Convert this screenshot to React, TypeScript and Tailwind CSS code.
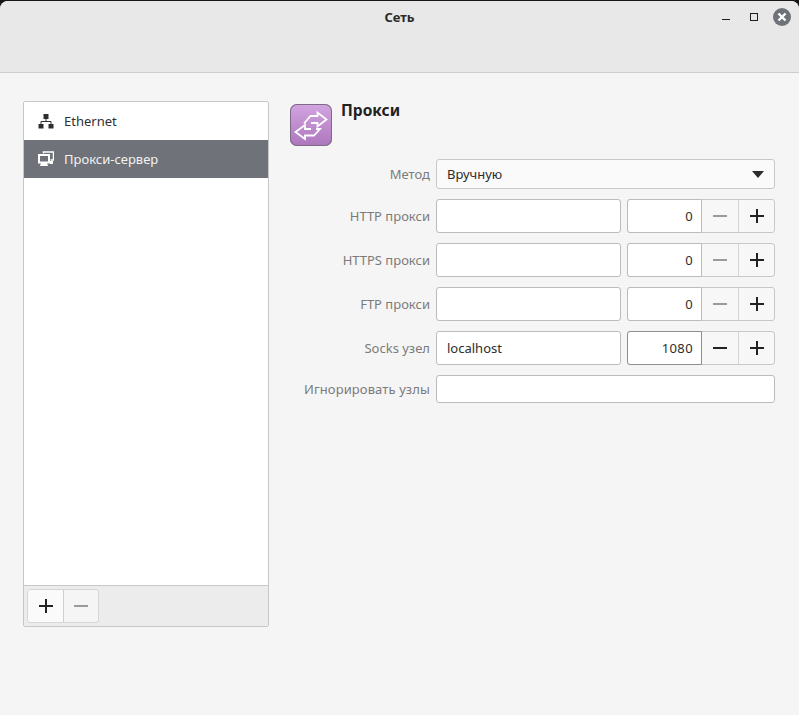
const font = { fontFamily: '"Noto Sans", "Open Sans", sans-serif' };

function Plus({ className = "" }: { className?: string }) {
  return (
    <svg width="16" height="16" viewBox="0 0 16 16" className={className}>
      <path d="M1 8h14M8 1v14" stroke="currentColor" strokeWidth="2" fill="none" />
    </svg>
  );
}

function Minus({ className = "" }: { className?: string }) {
  return (
    <svg width="16" height="16" viewBox="0 0 16 16" className={className}>
      <path d="M1 8h14" stroke="currentColor" strokeWidth="2" fill="none" />
    </svg>
  );
}

function Spin({ value, active = false }: { value: string; active?: boolean }) {
  return (
    <div className="flex h-full w-[148px] rounded-[3px] border border-[#c8c8c8] bg-[#f7f7f7]">
      <div
        className={`-m-px flex h-[34px] w-[75px] items-center justify-end rounded-l-[3px] border bg-white pr-[8px] pt-[2px] text-[13px] tracking-[0.4px] text-[#2e2e2e] ${
          active ? "border-[#8e8e8e]" : "border-[#bcbcbc]"
        }`}
      >
        {value}
      </div>
      <button className={`flex w-[37px] items-center justify-center ${active ? "text-[#222222]" : "text-[#9a9a9a]"}`}>
        <Minus />
      </button>
      <button className="flex flex-1 items-center justify-center border-l border-[#d4d4d4] text-[#222222]">
        <Plus />
      </button>
    </div>
  );
}

function Row({ label, host = "", port, active = false }: { label: string; host?: string; port: string; active?: boolean }) {
  return (
    <div className="flex h-[34px] items-center">
      <span className="w-[140px] pt-[2px] text-right text-[13px] text-[#7b7b7b]">{label}</span>
      <div className="mx-[6px] flex h-full w-[185px] items-center rounded-[3px] border border-[#bcbcbc] bg-white px-[10px] pt-[2px] text-[13px] text-[#2e2e2e]">
        {host}
      </div>
      <Spin value={port} active={active} />
    </div>
  );
}

export default function App() {
  return (
    <div className="h-[715px] w-[799px] overflow-hidden bg-[#161616]" style={font}>
      <div className="mt-px flex h-[714px] flex-col overflow-hidden rounded-t-[8px] bg-[#f5f5f5]">
        <header className="relative h-[72px] shrink-0 border-b border-[#cdcdcd] bg-[#e8e8e8]">
          <div className="pt-[6px] text-center text-[13px] font-bold leading-[20px] text-[#2b2b2b]">Сеть</div>
          <div className="absolute right-[8px] top-[7px] flex items-center">
            <div className="mr-[20px] mt-[5px] h-[1.5px] w-[8px] bg-[#1e1e1e]" />
            <div className="mr-[15px] h-[8px] w-[8px] border-[1.5px] border-[#1e1e1e]" />
            <div className="flex h-[18px] w-[18px] items-center justify-center rounded-full bg-[#6f7278]">
              <svg width="10" height="10" viewBox="0 0 10 10">
                <path d="M1.5 1.5l7 7M8.5 1.5l-7 7" stroke="#ffffff" strokeWidth="2.4" fill="none" />
              </svg>
            </div>
          </div>
        </header>

        <main className="flex flex-1 pl-[23px] pt-[28px]">
          <div className="flex h-[526px] w-[246px] flex-col rounded-[2px] border border-[#c8c8c8] bg-white">
            <div className="flex h-[38px] items-center pl-[14px] text-[13px] text-[#303030]">
              <svg width="16" height="16" viewBox="0 0 16 16" className="mr-[10px]">
                <path d="M5.5 1h5v5h-5zM0.5 11h5v4.500h-5zM10.500 11h5v4.500h-5z" fill="#2e2e2e" />
                <path d="M8 6v3M3 11V8.500h10V11" stroke="#2e2e2e" strokeWidth="1" fill="none" />
              </svg>
              <span className="pt-[2px]">Ethernet</span>
            </div>
            <div className="flex h-[38px] items-center bg-[#6f7278] pl-[14px] text-[13px] text-[#f2f2f2]">
              <svg width="16" height="16" viewBox="0 0 16 16" className="mr-[10px]">
                <path d="M5.500 2.500V1h10v8h-3" stroke="#ffffff" strokeWidth="1.500" fill="none" />
                <path d="M12 10h3v3h-3z" fill="#ffffff" />
                <path d="M1 4h10v7.500H1z" stroke="#ffffff" strokeWidth="2" fill="none" />
                <path d="M3 12h6l1 3H2z" fill="#ffffff" />
              </svg>
              <span className="pt-[2px]">Прокси-сервер</span>
            </div>
            <div className="flex-1" />
            <div className="flex h-[41px] items-center rounded-b-[2px] border-t border-[#c8c8c8] bg-[#ececec] pl-[3px]">
              <div className="flex h-[34px] w-[72px] rounded-[3px] border border-[#d6d6d6] bg-[#f5f5f5]">
                <button className="flex w-[36px] items-center justify-center rounded-l-[3px] border-r border-[#cfcfcf] bg-[#fafafa] text-[#222222]">
                  <Plus />
                </button>
                <button className="flex flex-1 items-center justify-center text-[#9a9a9a]">
                  <Minus />
                </button>
              </div>
            </div>
          </div>

          <section className="ml-[21px] w-[485px]">
            <div className="flex h-[58px]">
              <div className="mt-[3px] h-[42px] w-[42px] rounded-[7px] bg-gradient-to-b from-[#d2a5e0] to-[#ad76bd] shadow-[inset_0_0_0_1px_#7d6a85]">
                <svg width="42" height="42" viewBox="0 0 42 42">
                  <path d="M14 19.500L20.500 12h7V8.500L36.500 15.500 27.500 22.500V19H21" fill="none" stroke="#ffffff" strokeWidth="1.800" />
                  <path d="M21 25h-6v-4L5.500 28 15 35v-3.500h9l6-6.500h-4" fill="none" stroke="#ffffff" strokeWidth="1.800" />
                </svg>
              </div>
              <h1 className="ml-[9px] text-[15.5px] font-bold leading-[18px] text-[#222222]">Прокси</h1>
            </div>

            <div className="flex flex-col gap-[10px]">
              <div className="flex h-[30px] items-center">
                <span className="w-[140px] pt-[2px] text-right text-[13px] text-[#7b7b7b]">Метод</span>
                <div className="ml-[6px] flex h-full w-[339px] items-center justify-between rounded-[3px] border border-[#c8c8c8] bg-[#fafafa] px-[10px] text-[13px] text-[#2b2b2b]">
                  <span className="pt-[2px]">Вручную</span>
                  <svg width="12" height="7" viewBox="0 0 12 7">
                    <path d="M0 0h12L6 7z" fill="#2b2b2b" />
                  </svg>
                </div>
              </div>
              <Row label="HTTP прокси" port="0" />
              <Row label="HTTPS прокси" port="0" />
              <Row label="FTP прокси" port="0" />
              <Row label="Socks узел" host="localhost" port="1080" active />
              <div className="flex h-[28px] items-center">
                <span className="w-[140px] whitespace-nowrap pt-[2px] text-right text-[13px] tracking-[0.1px] text-[#7b7b7b]">Игнорировать узлы</span>
                <div className="ml-[6px] h-full w-[339px] rounded-[3px] border border-[#bcbcbc] bg-white" />
              </div>
            </div>
          </section>
        </main>
      </div>
    </div>
  );
}
